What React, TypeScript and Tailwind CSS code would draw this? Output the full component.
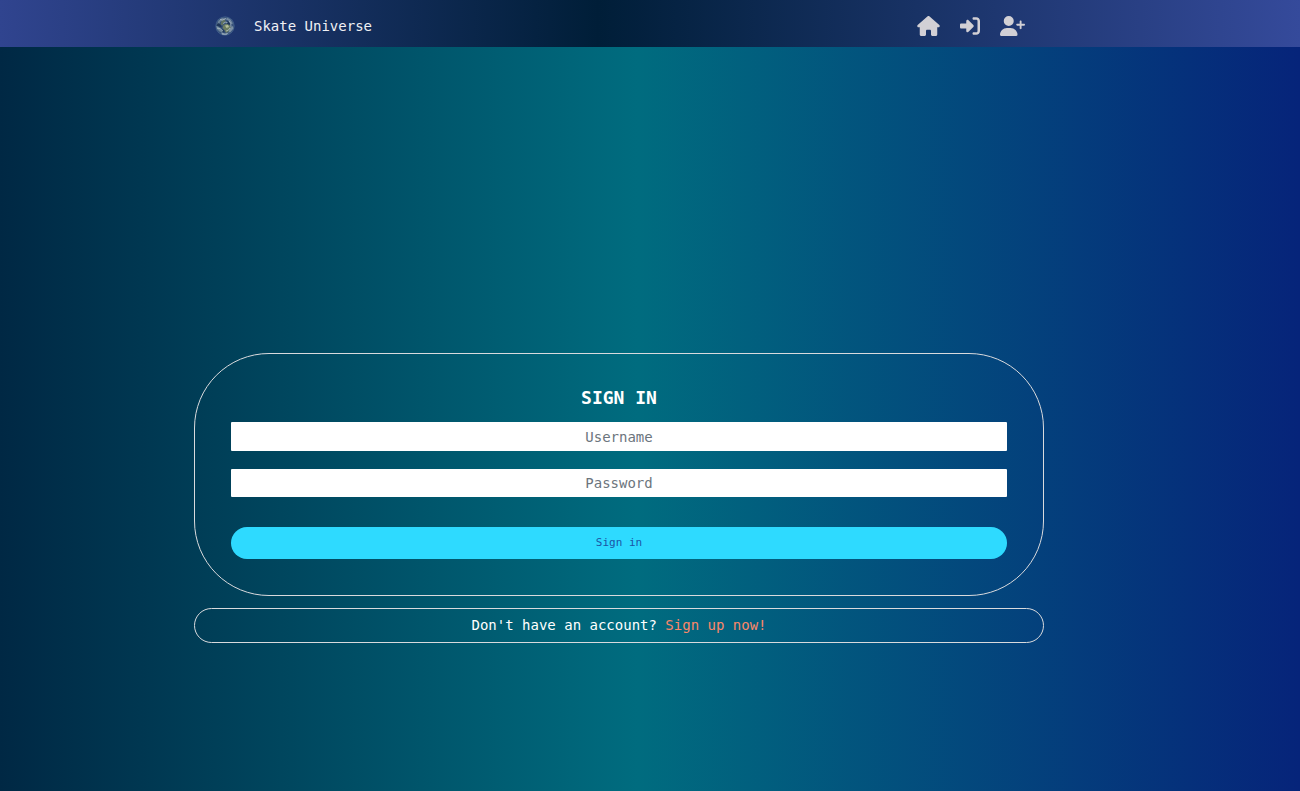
import { FaHouse, FaRightToBracket, FaUserPlus } from "react-icons/fa6";

function Globe() {
  return (
    <svg viewBox="0 0 40 40" className="size-5" aria-hidden="true">
      <defs>
        <clipPath id="disc">
          <circle cx="20" cy="20" r="19" />
        </clipPath>
      </defs>
      <circle cx="20" cy="20" r="19" fill="#37527a" />
      <g clipPath="url(#disc)">
        <path d="M7 9 14 4l8 1-4 4-7 2-3 5-4 1z" fill="#6d8399" />
        <path d="m24 3 7 4 5 8-4 1-4-6-6-3z" fill="#7288a0" />
        <path d="m13 10 6-3 3 4-5 3-1 5-5-2z" fill="#5f7261" />
        <path d="m17 18 6-3 6 3 3 5-4 7-6 4-3-6-4-4z" fill="#6c7d62" />
        <path d="m20 19 6-1 2 4-5 2z" fill="#b6c09c" />
        <path d="m2 20 5 1 5 5 5 3-1 4-7-2-5-5z" fill="#6f8699" />
        <path d="m12 33 8 2 8-2-5 5-8 0z" fill="#8fa2b2" />
        <path d="m30 24 6-4 1 5-6 7-4 1z" fill="#7c90a4" />
        <path d="m6 14 5 3 3 6-6-2-5-2z" fill="#1d3456" />
        <path d="m25 9 5 5-1 4-5-3z" fill="#1d3455" />
        <path d="m13 26 5 2 1 5-4-1z" fill="#213a5b" />
        <path d="M10 7q5 3 12-2M4 24q7 0 12 6m12-20q5 4 4 12M16 15q5-4 9-2M22 30q5 0 8-6" fill="none" stroke="#bcc9cf" strokeWidth="1.4" />
      </g>
      <circle cx="20" cy="20" r="18.5" fill="none" stroke="#5f7fae" strokeOpacity="0.6" />
    </svg>
  );
}

function App() {
  return (
    <div className="flex min-h-screen flex-col bg-[linear-gradient(90deg,#002844_0%,#006c7f_49%,#06247a_100%)] font-['DejaVu_Sans_Mono',monospace] text-sm text-white">
      <header className="flex h-[47px] items-center justify-between bg-[linear-gradient(90deg,#30448f_0%,#001e38_46%,#354a9b_100%)] pr-[275px] pl-[215px]">
        <a href="#" className="flex items-center gap-[19px] pt-1 text-[#f0f0f4]">
          <Globe />
          <span>Skate Universe</span>
        </a>
        <nav className="flex items-center gap-5 pt-1 text-[#d2d0d5]">
          <a href="#home" aria-label="Home">
            <FaHouse className="h-5 w-[23px]" />
          </a>
          <a href="#sign-in" aria-label="Sign in">
            <FaRightToBracket className="size-5" />
          </a>
          <a href="#sign-up" aria-label="Sign up">
            <FaUserPlus className="h-5 w-[25px]" />
          </a>
        </nav>
      </header>
      <main className="flex flex-col gap-3 pt-[306px] pr-[256px] pb-10 pl-[194px]">
        <form className="flex flex-col rounded-[75px] border border-[#d9dadd] px-9 pt-8 pb-9">
          <h1 className="text-center text-lg leading-6 font-bold">SIGN IN</h1>
          <input
            type="text"
            aria-label="Username"
            placeholder="Username"
            className="mt-3 h-[29px] rounded-[1px] bg-white text-center text-gray-900 placeholder:text-[#6c757d]"
          />
          <input
            type="password"
            aria-label="Password"
            placeholder="Password"
            className="mt-[18px] h-7 rounded-[1px] bg-white text-center text-gray-900 placeholder:text-[#6c757d]"
          />
          <button
            type="submit"
            className="mt-[30px] h-8 rounded-full bg-[#2edaff] text-[11px] text-[#1c55a5]"
          >
            Sign in
          </button>
        </form>
        <p className="rounded-full border border-[#d9dadd] py-1.5 text-center leading-[21px]">
          Don't have an account?{" "}
          <a href="#sign-up" className="text-[#fa8769]">
            Sign up now!
          </a>
        </p>
      </main>
    </div>
  );
}

export default App;
